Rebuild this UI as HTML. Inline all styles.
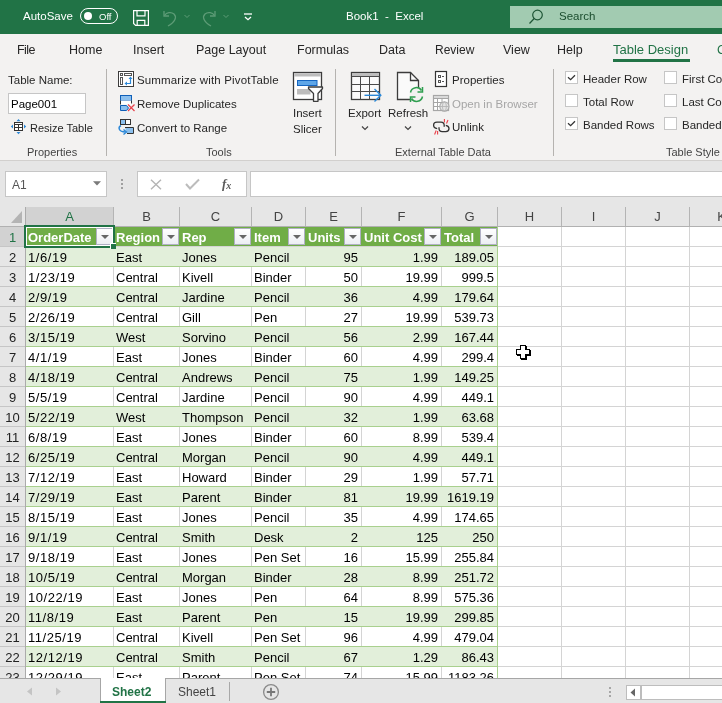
<!DOCTYPE html><html><head><meta charset="utf-8"><style>
*{margin:0;padding:0;box-sizing:border-box}
html,body{width:722px;height:703px;overflow:hidden;background:#e6e6e6;font-family:"Liberation Sans",sans-serif;position:relative}
.abs{position:absolute}
.t{position:absolute;white-space:nowrap;line-height:1;font-size:12px;color:#262626}
#title{position:absolute;left:0;top:0;width:722px;height:34px;background:#217346}
#ribbon{position:absolute;left:0;top:34px;width:722px;height:127px;background:#f3f2f1;border-bottom:1px solid #d2d0ce}
.colhdr{position:absolute;background:#e6e6e6}
.rowhdr{position:absolute;background:#e6e6e6}
.vl{position:absolute;width:1px}
.hl{position:absolute;height:1px}
.chl{position:absolute;top:207px;height:19px;line-height:19px;text-align:center;font-size:13px}
.th{position:absolute;height:19px;line-height:20px;padding-top:1px;padding-left:2px;font-size:13px;font-weight:bold;color:#fff;white-space:nowrap;overflow:hidden}
.td{position:absolute;height:19px;line-height:20px;padding-top:1px;padding-left:2px;font-size:13px;color:#000;white-space:nowrap}
.td.r{text-align:right;padding-left:0;padding-right:3px}
.rn{position:absolute;left:0;width:25px;height:19px;line-height:20px;padding-top:1px;text-align:center;font-size:13px}
.dd{position:absolute;width:17px;height:17px;border:1px solid #b0b0c4;background:linear-gradient(#fff,#eceef3)}
.dd i{position:absolute;left:3.5px;top:6px;width:0;height:0;border-left:4px solid transparent;border-right:4px solid transparent;border-top:4.5px solid #666}
.sep{position:absolute;width:1px;background:#b5b3b0}
.glabel{position:absolute;top:148px;font-size:11px;color:#444;white-space:nowrap;line-height:1}
.cb{position:absolute;width:13px;height:13px;border:1px solid #c6c6c6;background:#fff}
.cb svg{position:absolute;left:0;top:0}

.td.d{letter-spacing:0.55px}

#root{position:absolute;left:0;top:0;width:722px;height:703px;overflow:hidden;will-change:transform}

</style></head><body><div id="root">
<div id="title">
  <div class="t" style="left:23px;top:11px;color:#fff;font-size:11.5px">AutoSave</div>
  <div class="abs" style="left:80px;top:8px;width:38px;height:16px;border:1px solid #fff;border-radius:8px"></div>
  <div class="abs" style="left:84px;top:12px;width:8px;height:8px;background:#fff;border-radius:50%"></div>
  <div class="t" style="left:99px;top:12px;color:#fff;font-size:9.5px">Off</div>
  <svg class="abs" style="left:133px;top:10px" width="16" height="16" viewBox="0 0 16 16" fill="none" stroke="#fff" stroke-width="1.2">
    <path d="M0.6 0.6H15.4V15.4H2.6L0.6 13.4Z"/><path d="M4 0.6V5.8H12V0.6"/><path d="M4.2 15.4V10.4H11.8V15.4"/>
  </svg>
  <svg class="abs" style="left:160px;top:9px" width="32" height="18" viewBox="0 0 32 18" fill="none" stroke="#5e9c77" stroke-width="1.3">
    <path d="M4 2V7H9"/><path d="M4.5 6.5C6.5 3.5 11 2.5 14 5C17 8 15.5 12.5 8 17"/><path d="M24.5 6L27 8.5L29.5 6" stroke-width="1"/>
  </svg>
  <svg class="abs" style="left:200px;top:9px" width="32" height="18" viewBox="0 0 32 18" fill="none" stroke="#5e9c77" stroke-width="1.3">
    <path d="M15 2V7H10"/><path d="M14.5 6.5C12.5 3.5 8 2.5 5 5C2 8 3.5 12.5 11 17"/><path d="M23.5 6L26 8.5L28.5 6" stroke-width="1"/>
  </svg>
  <svg class="abs" style="left:243px;top:12px" width="10" height="10" viewBox="0 0 10 10" fill="none" stroke="#fff" stroke-width="1.3">
    <path d="M1 2H9"/><path d="M2 5L5 7.7L8 5"/>
  </svg>
  <div class="t" style="left:346px;top:11px;color:#fff;font-size:11.5px">Book1&nbsp; -&nbsp; Excel</div>
  <div class="abs" style="left:510px;top:6px;width:212px;height:22px;background:#a2cbb1"></div>
  <svg class="abs" style="left:528px;top:8px" width="16" height="18" viewBox="0 0 16 18" fill="none" stroke="#1e5535" stroke-width="1.2">
    <circle cx="9.5" cy="7" r="4.8"/><path d="M6.2 10.5L1.5 15.5"/>
  </svg>
  <div class="t" style="left:559px;top:11px;color:#1b4d2e;font-size:11.5px">Search</div>
</div>
<div id="ribbon"></div>
<div class="t" style="left:17px;top:44px;font-size:12.5px;letter-spacing:-0.6px">File</div>
<div class="t" style="left:69px;top:44px;font-size:12.5px">Home</div>
<div class="t" style="left:133px;top:44px;font-size:12.5px">Insert</div>
<div class="t" style="left:196px;top:44px;font-size:12.5px">Page Layout</div>
<div class="t" style="left:297px;top:44px;font-size:12.5px">Formulas</div>
<div class="t" style="left:379px;top:44px;font-size:12.5px">Data</div>
<div class="t" style="left:435px;top:44px;font-size:12px">Review</div>
<div class="t" style="left:503px;top:44px;font-size:12.5px">View</div>
<div class="t" style="left:557px;top:44px;font-size:12.5px">Help</div>
<div class="t" style="left:613px;top:43px;font-size:13px;color:#217346">Table Design</div>
<div class="abs" style="left:613px;top:59px;width:77px;height:3px;background:#217346"></div>
<div class="t" style="left:717px;top:44px;font-size:12.5px;color:#217346">G</div>

<!-- Properties group -->
<div class="t" style="left:8px;top:75px;font-size:11.5px">Table Name:</div>
<div class="abs" style="left:8px;top:93px;width:78px;height:21px;background:#fff;border:1px solid #c6c6c6"></div>
<div class="t" style="left:11px;top:99px;font-size:11.5px;color:#000">Page001</div>
<svg class="abs" style="left:10px;top:118px" width="18" height="18" viewBox="0 0 18 18">
  <rect x="4.5" y="4.5" width="8" height="8" fill="#fff" stroke="#333"/>
  <path d="M4.5 6.5H12.5M4.5 9.5H12.5M8.5 6.5V12.5" stroke="#333" fill="none"/>
  <path d="M6.5 3.2L8.5 1L10.5 3.2Z M6.5 14L8.5 16.2L10.5 14Z M3 6.5L0.8 8.5L3 10.5Z M14 6.5L16.2 8.5L14 10.5Z" fill="#2b88d8"/>
</svg>
<div class="t" style="left:30px;top:123px;font-size:11px">Resize Table</div>
<div class="glabel" style="left:27px;top:147px">Properties</div>
<div class="sep" style="left:106px;top:69px;height:87px"></div>

<!-- Tools group -->
<svg class="abs" style="left:118px;top:71px" width="16" height="16" viewBox="0 0 16 16">
  <rect x="0.5" y="0.5" width="15" height="15" fill="#fff" stroke="#3c3c3c"/>
  <rect x="2.5" y="2.5" width="2" height="2" fill="#fff" stroke="#555"/>
  <rect x="6.5" y="2.5" width="7" height="2" fill="#fff" stroke="#555"/>
  <rect x="2.5" y="6.5" width="2" height="7" fill="#fff" stroke="#555"/>
  <path d="M8 12.5H12.5V7" fill="none" stroke="#2b88d8" stroke-width="1.2"/>
  <path d="M10.5 8L12.5 5.5L14.5 8Z M9 10.5L6.5 12.5L9 14.5Z" fill="#2b88d8"/>
</svg>
<div class="t" style="left:137px;top:75px;font-size:11.5px;letter-spacing:0.15px">Summarize with PivotTable</div>
<svg class="abs" style="left:118px;top:94px" width="18" height="18" viewBox="0 0 18 18">
  <rect x="2.5" y="1.5" width="11" height="5" fill="#8cc0ee" stroke="#0f5fb8"/>
  <rect x="2.5" y="6.5" width="11" height="4" fill="#fff" stroke="none"/>
  <path d="M2.5 6.5V10.5M13.5 6.5V9.5" stroke="#333" fill="none"/>
  <path d="M2.5 11.5H8.5L10.5 14L8.5 16.5H2.5Z" fill="#8cc0ee" stroke="#0f5fb8"/>
  <path d="M10 10.5L16.5 17M16.5 10.5L10 17" stroke="#e8404a" stroke-width="1.2"/>
</svg>
<div class="t" style="left:137px;top:99px;font-size:11.5px">Remove Duplicates</div>
<svg class="abs" style="left:116px;top:117px" width="20" height="19" viewBox="0 0 20 19">
  <rect x="4.5" y="2.5" width="5" height="5" fill="#8cc0ee" stroke="#333"/>
  <rect x="9.5" y="2.5" width="5" height="5" fill="#fff" stroke="#333"/>
  <path d="M9 10.5H17.5V16.5H11" fill="#8cc0ee" stroke="#333"/>
  <path d="M5 8.5C2 10 2 15 9.5 15" fill="none" stroke="#2b88d8" stroke-width="1.4"/>
  <path d="M7.5 12.5L10.5 15L7.5 17.5" fill="none" stroke="#2b88d8" stroke-width="1.4"/>
</svg>
<div class="t" style="left:137px;top:123px;font-size:11.5px">Convert to Range</div>
<svg class="abs" style="left:292px;top:71px" width="32" height="32" viewBox="0 0 32 32">
  <rect x="1.5" y="1.5" width="28" height="27" fill="#fff" stroke="#3c3c3c" stroke-width="1.3"/>
  <rect x="2.2" y="2.2" width="26.6" height="3.3" fill="#bdbdbd"/>
  <rect x="5.5" y="9.5" width="19.5" height="5" fill="#5ea6e8" stroke="#1565c0"/>
  <rect x="5" y="18" width="13.5" height="5.5" fill="#bdbdbd"/>
  <path d="M16.5 16H30.5V17.5L26 22.5V30.3H21.5V22.5L16.5 17.5Z" fill="#fff" stroke="#3c3c3c" stroke-width="1.3" stroke-linejoin="round"/>
</svg>
<div class="t" style="left:293px;top:108px;font-size:11.5px">Insert</div>
<div class="t" style="left:293px;top:124px;font-size:11.5px">Slicer</div>
<div class="glabel" style="left:206px;top:147px">Tools</div>
<div class="sep" style="left:335px;top:69px;height:87px"></div>

<!-- External Table Data -->
<svg class="abs" style="left:350px;top:71px" width="34" height="32" viewBox="0 0 34 32">
  <rect x="1.5" y="1.5" width="28" height="27" fill="#fafafa" stroke="#3c3c3c" stroke-width="1.3"/>
  <rect x="2" y="2" width="27" height="3.5" fill="#bdbdbd"/>
  <path d="M1.5 5.5H29.5M1.5 13.5H29.5M1.5 20.5H29.5M10.5 5.5V28.5M19.5 5.5V28.5" stroke="#4a4a4a" fill="none"/>
  <path d="M14.5 24.3H31" stroke="#2b88d8" stroke-width="1.4"/>
  <path d="M24.5 18L30.8 24.3L24.5 30.6" fill="none" stroke="#2b88d8" stroke-width="1.4"/>
</svg>
<div class="t" style="left:348px;top:108px;font-size:11.5px">Export</div>
<svg class="abs" style="left:361px;top:125px" width="8" height="6" viewBox="0 0 8 6"><path d="M1 1.5L4 4.5L7 1.5" fill="none" stroke="#444" stroke-width="1.2"/></svg>
<svg class="abs" style="left:396px;top:71px" width="32" height="32" viewBox="0 0 32 32">
  <path d="M1.5 1.5H14.5L22.5 9.5V28.5H1.5Z" fill="#fafafa" stroke="#3c3c3c" stroke-width="1.3"/>
  <path d="M14.5 1.5V9.5H22.5" fill="none" stroke="#3c3c3c" stroke-width="1.3"/>
  <circle cx="20.5" cy="23.5" r="7" fill="#f3f2f1"/>
  <path d="M14.5 21.5A6 6 0 0 1 25.5 19.5M26.5 25.5A6 6 0 0 1 15.5 27.5" fill="none" stroke="#2e9e4f" stroke-width="1.5"/>
  <path d="M26.5 16V21H21.5M14.5 31V26H19.5" fill="none" stroke="#2e9e4f" stroke-width="1.5"/>
</svg>
<div class="t" style="left:388px;top:108px;font-size:11.5px">Refresh</div>
<svg class="abs" style="left:404px;top:125px" width="8" height="6" viewBox="0 0 8 6"><path d="M1 1.5L4 4.5L7 1.5" fill="none" stroke="#444" stroke-width="1.2"/></svg>
<svg class="abs" style="left:434px;top:70px" width="14" height="18" viewBox="0 0 14 18">
  <rect x="1.5" y="1.5" width="11" height="15" fill="#fff" stroke="#333" stroke-width="1.2"/>
  <rect x="4.5" y="5.5" width="2" height="2" fill="#fff" stroke="#555"/>
  <rect x="4.5" y="10.5" width="2" height="2" fill="#fff" stroke="#555"/>
  <path d="M8 6.5H10M8 11.5H10" stroke="#555"/>
</svg>
<div class="t" style="left:452px;top:75px;font-size:11.5px">Properties</div>
<svg class="abs" style="left:432px;top:94px" width="18" height="18" viewBox="0 0 18 18">
  <rect x="1.5" y="1.5" width="15" height="15" fill="#fff" stroke="#a6a6a6" stroke-width="1.2"/>
  <rect x="2" y="2" width="14" height="2.5" fill="#d9d9d9"/>
  <path d="M1.5 4.5H16.5M1.5 8.5H10M1.5 12.5H9M5.5 4.5V16.5M10 4.5V8.5" stroke="#a6a6a6" fill="none"/>
  <circle cx="12.4" cy="12.5" r="4.6" fill="#e4e4e4" stroke="#a6a6a6" stroke-width="1.1"/>
  <ellipse cx="12.4" cy="12.5" rx="2" ry="4.4" fill="none" stroke="#b4b4b4" stroke-width="0.8"/>
  <path d="M8 12.5H16.8" stroke="#b4b4b4" stroke-width="0.9"/>
</svg>
<div class="t" style="left:452px;top:99px;font-size:11.5px;color:#a6a6a6">Open in Browser</div>
<svg class="abs" style="left:432px;top:118px" width="18" height="18" viewBox="0 0 18 18">
  <path d="M5.2 10.6C3 10.3 1.6 9 1.6 7.3C1.6 5.4 3.1 4.2 5 4.2H9C11 4.2 12.2 5.6 12.2 7.6V8.8" fill="none" stroke="#333" stroke-width="1.3"/>
  <path d="M7 9.2V10.2C7 12.2 8.2 13.6 10.2 13.6H13.8C15.7 13.6 17 12.4 17 10.6C17 9 15.8 7.8 13.8 7.4" fill="none" stroke="#333" stroke-width="1.3"/>
  <path d="M12.4 1V4.5M16 2L14.5 5.5M4.2 12.5L2.6 16.5M5.6 13V16.6" stroke="#e8404a" stroke-width="1.1" fill="none"/>
</svg>
<div class="t" style="left:452px;top:122px;font-size:11.5px">Unlink</div>
<div class="glabel" style="left:395px;top:147px;font-size:11px">External Table Data</div>
<div class="sep" style="left:553px;top:69px;height:87px"></div>

<!-- Table Style Options -->
<div class="cb" style="left:565px;top:71px"><svg width="11" height="11" viewBox="0 0 11 11"><path d="M2 5.3L4.6 7.7L9 3.2" fill="none" stroke="#333" stroke-width="1.3"/></svg></div>
<div class="t" style="left:583px;top:74px;font-size:11.5px">Header Row</div>
<div class="cb" style="left:565px;top:94px"></div>
<div class="t" style="left:583px;top:97px;font-size:11.5px">Total Row</div>
<div class="cb" style="left:565px;top:117px"><svg width="11" height="11" viewBox="0 0 11 11"><path d="M2 5.3L4.6 7.7L9 3.2" fill="none" stroke="#333" stroke-width="1.3"/></svg></div>
<div class="t" style="left:583px;top:120px;font-size:11.5px">Banded Rows</div>
<div class="cb" style="left:664px;top:71px"></div>
<div class="t" style="left:682px;top:74px;font-size:11.5px">First Column</div>
<div class="cb" style="left:664px;top:94px"></div>
<div class="t" style="left:682px;top:97px;font-size:11.5px">Last Column</div>
<div class="cb" style="left:664px;top:117px"></div>
<div class="t" style="left:682px;top:120px;font-size:11.5px">Banded Columns</div>
<div class="glabel" style="left:666px;top:147px">Table Style Options</div>

<!-- Formula bar -->
<div class="abs" style="left:5px;top:171px;width:102px;height:26px;background:#fff;border:1px solid #c6c6c6"></div>
<div class="t" style="left:12px;top:179px;font-size:12px;color:#555">A1</div>
<svg class="abs" style="left:93px;top:181px" width="8" height="5" viewBox="0 0 8 5"><path d="M0 0.2H8L4 4.5Z" fill="#7a7a7a"/></svg>
<div class="abs" style="left:121px;top:179px;width:2px;height:2px;background:#a0a0a0"></div>
<div class="abs" style="left:121px;top:183px;width:2px;height:2px;background:#a0a0a0"></div>
<div class="abs" style="left:121px;top:187px;width:2px;height:2px;background:#a0a0a0"></div>
<div class="abs" style="left:137px;top:171px;width:110px;height:26px;background:#fff;border:1px solid #c6c6c6"></div>
<svg class="abs" style="left:150px;top:179px" width="12" height="11" viewBox="0 0 12 11"><path d="M1 0.8L11 10.2M11 0.8L1 10.2" stroke="#b4b4b4" stroke-width="1.4"/></svg>
<svg class="abs" style="left:185px;top:178px" width="15" height="12" viewBox="0 0 15 12"><path d="M1 6L5 10.5L14 1.5" fill="none" stroke="#bcbcbc" stroke-width="2"/></svg>
<div class="t" style="left:222px;top:177px;font-size:13px;color:#5a5a5a;font-family:'Liberation Serif',serif;font-style:italic;font-weight:bold">f<span style="font-size:10px;position:relative;top:1px">x</span></div>
<div class="abs" style="left:250px;top:171px;width:480px;height:26px;background:#fff;border:1px solid #c6c6c6"></div>

<div id="grid">
<div class="colhdr" style="left:0;top:207px;width:722px;height:19px"></div>
<svg style="position:absolute;left:0;top:207px" width="25" height="19"><polygon points="11,16 22,16 22,4" fill="#b4b4b4"/></svg>
<div style="position:absolute;left:26px;top:207px;width:87px;height:19px;background:#d2d2d2"></div>
<div class="vl" style="left:25px;top:207px;height:19px;background:#b4b4b4"></div>
<div class="chl" style="left:26px;width:87px;color:#217346">A</div>
<div class="vl" style="left:113px;top:207px;height:19px;background:#b4b4b4"></div>
<div class="chl" style="left:114px;width:65px;color:#444">B</div>
<div class="vl" style="left:179px;top:207px;height:19px;background:#b4b4b4"></div>
<div class="chl" style="left:180px;width:71px;color:#444">C</div>
<div class="vl" style="left:251px;top:207px;height:19px;background:#b4b4b4"></div>
<div class="chl" style="left:252px;width:53px;color:#444">D</div>
<div class="vl" style="left:305px;top:207px;height:19px;background:#b4b4b4"></div>
<div class="chl" style="left:306px;width:55px;color:#444">E</div>
<div class="vl" style="left:361px;top:207px;height:19px;background:#b4b4b4"></div>
<div class="chl" style="left:362px;width:79px;color:#444">F</div>
<div class="vl" style="left:441px;top:207px;height:19px;background:#b4b4b4"></div>
<div class="chl" style="left:442px;width:55px;color:#444">G</div>
<div class="vl" style="left:497px;top:207px;height:19px;background:#b4b4b4"></div>
<div class="chl" style="left:498px;width:63px;color:#444">H</div>
<div class="vl" style="left:561px;top:207px;height:19px;background:#b4b4b4"></div>
<div class="chl" style="left:562px;width:63px;color:#444">I</div>
<div class="vl" style="left:625px;top:207px;height:19px;background:#b4b4b4"></div>
<div class="chl" style="left:626px;width:63px;color:#444">J</div>
<div class="vl" style="left:689px;top:207px;height:19px;background:#b4b4b4"></div>
<div class="chl" style="left:690px;width:63px;color:#444">K</div>
<div class="hl" style="left:0;top:226px;width:722px;background:#b1b1b1"></div>
<div class="rowhdr" style="left:0;top:227px;width:25px;height:451px"></div>
<div style="position:absolute;left:0;top:227px;width:25px;height:19px;background:#d2d2d2"></div>
<div class="vl" style="left:25px;top:207px;height:471px;background:#ababab"></div>
<div style="position:absolute;left:26px;top:227px;width:696px;height:451px;background:#fff"></div>
<div class="hl" style="left:26px;top:246px;width:696px;background:#d4d4d4"></div>
<div class="hl" style="left:0;top:246px;width:25px;background:#c6c6c6"></div>
<div class="hl" style="left:26px;top:266px;width:696px;background:#d4d4d4"></div>
<div class="hl" style="left:0;top:266px;width:25px;background:#c6c6c6"></div>
<div class="hl" style="left:26px;top:286px;width:696px;background:#d4d4d4"></div>
<div class="hl" style="left:0;top:286px;width:25px;background:#c6c6c6"></div>
<div class="hl" style="left:26px;top:306px;width:696px;background:#d4d4d4"></div>
<div class="hl" style="left:0;top:306px;width:25px;background:#c6c6c6"></div>
<div class="hl" style="left:26px;top:326px;width:696px;background:#d4d4d4"></div>
<div class="hl" style="left:0;top:326px;width:25px;background:#c6c6c6"></div>
<div class="hl" style="left:26px;top:346px;width:696px;background:#d4d4d4"></div>
<div class="hl" style="left:0;top:346px;width:25px;background:#c6c6c6"></div>
<div class="hl" style="left:26px;top:366px;width:696px;background:#d4d4d4"></div>
<div class="hl" style="left:0;top:366px;width:25px;background:#c6c6c6"></div>
<div class="hl" style="left:26px;top:386px;width:696px;background:#d4d4d4"></div>
<div class="hl" style="left:0;top:386px;width:25px;background:#c6c6c6"></div>
<div class="hl" style="left:26px;top:406px;width:696px;background:#d4d4d4"></div>
<div class="hl" style="left:0;top:406px;width:25px;background:#c6c6c6"></div>
<div class="hl" style="left:26px;top:426px;width:696px;background:#d4d4d4"></div>
<div class="hl" style="left:0;top:426px;width:25px;background:#c6c6c6"></div>
<div class="hl" style="left:26px;top:446px;width:696px;background:#d4d4d4"></div>
<div class="hl" style="left:0;top:446px;width:25px;background:#c6c6c6"></div>
<div class="hl" style="left:26px;top:466px;width:696px;background:#d4d4d4"></div>
<div class="hl" style="left:0;top:466px;width:25px;background:#c6c6c6"></div>
<div class="hl" style="left:26px;top:486px;width:696px;background:#d4d4d4"></div>
<div class="hl" style="left:0;top:486px;width:25px;background:#c6c6c6"></div>
<div class="hl" style="left:26px;top:506px;width:696px;background:#d4d4d4"></div>
<div class="hl" style="left:0;top:506px;width:25px;background:#c6c6c6"></div>
<div class="hl" style="left:26px;top:526px;width:696px;background:#d4d4d4"></div>
<div class="hl" style="left:0;top:526px;width:25px;background:#c6c6c6"></div>
<div class="hl" style="left:26px;top:546px;width:696px;background:#d4d4d4"></div>
<div class="hl" style="left:0;top:546px;width:25px;background:#c6c6c6"></div>
<div class="hl" style="left:26px;top:566px;width:696px;background:#d4d4d4"></div>
<div class="hl" style="left:0;top:566px;width:25px;background:#c6c6c6"></div>
<div class="hl" style="left:26px;top:586px;width:696px;background:#d4d4d4"></div>
<div class="hl" style="left:0;top:586px;width:25px;background:#c6c6c6"></div>
<div class="hl" style="left:26px;top:606px;width:696px;background:#d4d4d4"></div>
<div class="hl" style="left:0;top:606px;width:25px;background:#c6c6c6"></div>
<div class="hl" style="left:26px;top:626px;width:696px;background:#d4d4d4"></div>
<div class="hl" style="left:0;top:626px;width:25px;background:#c6c6c6"></div>
<div class="hl" style="left:26px;top:646px;width:696px;background:#d4d4d4"></div>
<div class="hl" style="left:0;top:646px;width:25px;background:#c6c6c6"></div>
<div class="hl" style="left:26px;top:666px;width:696px;background:#d4d4d4"></div>
<div class="hl" style="left:0;top:666px;width:25px;background:#c6c6c6"></div>
<div class="vl" style="left:113px;top:227px;height:451px;background:#d4d4d4"></div>
<div class="vl" style="left:179px;top:227px;height:451px;background:#d4d4d4"></div>
<div class="vl" style="left:251px;top:227px;height:451px;background:#d4d4d4"></div>
<div class="vl" style="left:305px;top:227px;height:451px;background:#d4d4d4"></div>
<div class="vl" style="left:361px;top:227px;height:451px;background:#d4d4d4"></div>
<div class="vl" style="left:441px;top:227px;height:451px;background:#d4d4d4"></div>
<div class="vl" style="left:497px;top:227px;height:451px;background:#d4d4d4"></div>
<div class="vl" style="left:561px;top:227px;height:451px;background:#d4d4d4"></div>
<div class="vl" style="left:625px;top:227px;height:451px;background:#d4d4d4"></div>
<div class="vl" style="left:689px;top:227px;height:451px;background:#d4d4d4"></div>
<div style="position:absolute;left:26px;top:227px;width:471px;height:19px;background:#70ad47"></div>
<div class="th" style="left:26px;top:227px;width:87px">OrderDate</div>
<div class="dd" style="left:96px;top:228px"><i></i></div>
<div class="th" style="left:114px;top:227px;width:65px">Region</div>
<div class="dd" style="left:162px;top:228px"><i></i></div>
<div class="th" style="left:180px;top:227px;width:71px">Rep</div>
<div class="dd" style="left:234px;top:228px"><i></i></div>
<div class="th" style="left:252px;top:227px;width:53px">Item</div>
<div class="dd" style="left:288px;top:228px"><i></i></div>
<div class="th" style="left:306px;top:227px;width:55px">Units</div>
<div class="dd" style="left:344px;top:228px"><i></i></div>
<div class="th" style="left:362px;top:227px;width:79px">Unit Cost</div>
<div class="dd" style="left:424px;top:228px"><i></i></div>
<div class="th" style="left:442px;top:227px;width:55px">Total</div>
<div class="dd" style="left:480px;top:228px"><i></i></div>
<div class="rn" style="top:227px;color:#217346">1</div>
<div style="position:absolute;left:26px;top:247px;width:471px;height:19px;background:#e2efda"></div>
<div class="hl" style="left:26px;top:266px;width:471px;background:#a9d08e"></div>
<div class="td d" style="left:26px;top:247px;width:87px">1/6/19</div>
<div class="td" style="left:114px;top:247px;width:65px">East</div>
<div class="td" style="left:180px;top:247px;width:71px">Jones</div>
<div class="td" style="left:252px;top:247px;width:53px">Pencil</div>
<div class="td r" style="left:306px;top:247px;width:55px">95</div>
<div class="td r" style="left:362px;top:247px;width:79px">1.99</div>
<div class="td r" style="left:442px;top:247px;width:55px">189.05</div>
<div class="rn" style="top:247px;color:#222">2</div>
<div class="hl" style="left:26px;top:286px;width:471px;background:#a9d08e"></div>
<div class="td d" style="left:26px;top:267px;width:87px">1/23/19</div>
<div class="td" style="left:114px;top:267px;width:65px">Central</div>
<div class="td" style="left:180px;top:267px;width:71px">Kivell</div>
<div class="td" style="left:252px;top:267px;width:53px">Binder</div>
<div class="td r" style="left:306px;top:267px;width:55px">50</div>
<div class="td r" style="left:362px;top:267px;width:79px">19.99</div>
<div class="td r" style="left:442px;top:267px;width:55px">999.5</div>
<div class="rn" style="top:267px;color:#222">3</div>
<div style="position:absolute;left:26px;top:287px;width:471px;height:19px;background:#e2efda"></div>
<div class="hl" style="left:26px;top:306px;width:471px;background:#a9d08e"></div>
<div class="td d" style="left:26px;top:287px;width:87px">2/9/19</div>
<div class="td" style="left:114px;top:287px;width:65px">Central</div>
<div class="td" style="left:180px;top:287px;width:71px">Jardine</div>
<div class="td" style="left:252px;top:287px;width:53px">Pencil</div>
<div class="td r" style="left:306px;top:287px;width:55px">36</div>
<div class="td r" style="left:362px;top:287px;width:79px">4.99</div>
<div class="td r" style="left:442px;top:287px;width:55px">179.64</div>
<div class="rn" style="top:287px;color:#222">4</div>
<div class="hl" style="left:26px;top:326px;width:471px;background:#a9d08e"></div>
<div class="td d" style="left:26px;top:307px;width:87px">2/26/19</div>
<div class="td" style="left:114px;top:307px;width:65px">Central</div>
<div class="td" style="left:180px;top:307px;width:71px">Gill</div>
<div class="td" style="left:252px;top:307px;width:53px">Pen</div>
<div class="td r" style="left:306px;top:307px;width:55px">27</div>
<div class="td r" style="left:362px;top:307px;width:79px">19.99</div>
<div class="td r" style="left:442px;top:307px;width:55px">539.73</div>
<div class="rn" style="top:307px;color:#222">5</div>
<div style="position:absolute;left:26px;top:327px;width:471px;height:19px;background:#e2efda"></div>
<div class="hl" style="left:26px;top:346px;width:471px;background:#a9d08e"></div>
<div class="td d" style="left:26px;top:327px;width:87px">3/15/19</div>
<div class="td" style="left:114px;top:327px;width:65px">West</div>
<div class="td" style="left:180px;top:327px;width:71px">Sorvino</div>
<div class="td" style="left:252px;top:327px;width:53px">Pencil</div>
<div class="td r" style="left:306px;top:327px;width:55px">56</div>
<div class="td r" style="left:362px;top:327px;width:79px">2.99</div>
<div class="td r" style="left:442px;top:327px;width:55px">167.44</div>
<div class="rn" style="top:327px;color:#222">6</div>
<div class="hl" style="left:26px;top:366px;width:471px;background:#a9d08e"></div>
<div class="td d" style="left:26px;top:347px;width:87px">4/1/19</div>
<div class="td" style="left:114px;top:347px;width:65px">East</div>
<div class="td" style="left:180px;top:347px;width:71px">Jones</div>
<div class="td" style="left:252px;top:347px;width:53px">Binder</div>
<div class="td r" style="left:306px;top:347px;width:55px">60</div>
<div class="td r" style="left:362px;top:347px;width:79px">4.99</div>
<div class="td r" style="left:442px;top:347px;width:55px">299.4</div>
<div class="rn" style="top:347px;color:#222">7</div>
<div style="position:absolute;left:26px;top:367px;width:471px;height:19px;background:#e2efda"></div>
<div class="hl" style="left:26px;top:386px;width:471px;background:#a9d08e"></div>
<div class="td d" style="left:26px;top:367px;width:87px">4/18/19</div>
<div class="td" style="left:114px;top:367px;width:65px">Central</div>
<div class="td" style="left:180px;top:367px;width:71px">Andrews</div>
<div class="td" style="left:252px;top:367px;width:53px">Pencil</div>
<div class="td r" style="left:306px;top:367px;width:55px">75</div>
<div class="td r" style="left:362px;top:367px;width:79px">1.99</div>
<div class="td r" style="left:442px;top:367px;width:55px">149.25</div>
<div class="rn" style="top:367px;color:#222">8</div>
<div class="hl" style="left:26px;top:406px;width:471px;background:#a9d08e"></div>
<div class="td d" style="left:26px;top:387px;width:87px">5/5/19</div>
<div class="td" style="left:114px;top:387px;width:65px">Central</div>
<div class="td" style="left:180px;top:387px;width:71px">Jardine</div>
<div class="td" style="left:252px;top:387px;width:53px">Pencil</div>
<div class="td r" style="left:306px;top:387px;width:55px">90</div>
<div class="td r" style="left:362px;top:387px;width:79px">4.99</div>
<div class="td r" style="left:442px;top:387px;width:55px">449.1</div>
<div class="rn" style="top:387px;color:#222">9</div>
<div style="position:absolute;left:26px;top:407px;width:471px;height:19px;background:#e2efda"></div>
<div class="hl" style="left:26px;top:426px;width:471px;background:#a9d08e"></div>
<div class="td d" style="left:26px;top:407px;width:87px">5/22/19</div>
<div class="td" style="left:114px;top:407px;width:65px">West</div>
<div class="td" style="left:180px;top:407px;width:71px">Thompson</div>
<div class="td" style="left:252px;top:407px;width:53px">Pencil</div>
<div class="td r" style="left:306px;top:407px;width:55px">32</div>
<div class="td r" style="left:362px;top:407px;width:79px">1.99</div>
<div class="td r" style="left:442px;top:407px;width:55px">63.68</div>
<div class="rn" style="top:407px;color:#222">10</div>
<div class="hl" style="left:26px;top:446px;width:471px;background:#a9d08e"></div>
<div class="td d" style="left:26px;top:427px;width:87px">6/8/19</div>
<div class="td" style="left:114px;top:427px;width:65px">East</div>
<div class="td" style="left:180px;top:427px;width:71px">Jones</div>
<div class="td" style="left:252px;top:427px;width:53px">Binder</div>
<div class="td r" style="left:306px;top:427px;width:55px">60</div>
<div class="td r" style="left:362px;top:427px;width:79px">8.99</div>
<div class="td r" style="left:442px;top:427px;width:55px">539.4</div>
<div class="rn" style="top:427px;color:#222">11</div>
<div style="position:absolute;left:26px;top:447px;width:471px;height:19px;background:#e2efda"></div>
<div class="hl" style="left:26px;top:466px;width:471px;background:#a9d08e"></div>
<div class="td d" style="left:26px;top:447px;width:87px">6/25/19</div>
<div class="td" style="left:114px;top:447px;width:65px">Central</div>
<div class="td" style="left:180px;top:447px;width:71px">Morgan</div>
<div class="td" style="left:252px;top:447px;width:53px">Pencil</div>
<div class="td r" style="left:306px;top:447px;width:55px">90</div>
<div class="td r" style="left:362px;top:447px;width:79px">4.99</div>
<div class="td r" style="left:442px;top:447px;width:55px">449.1</div>
<div class="rn" style="top:447px;color:#222">12</div>
<div class="hl" style="left:26px;top:486px;width:471px;background:#a9d08e"></div>
<div class="td d" style="left:26px;top:467px;width:87px">7/12/19</div>
<div class="td" style="left:114px;top:467px;width:65px">East</div>
<div class="td" style="left:180px;top:467px;width:71px">Howard</div>
<div class="td" style="left:252px;top:467px;width:53px">Binder</div>
<div class="td r" style="left:306px;top:467px;width:55px">29</div>
<div class="td r" style="left:362px;top:467px;width:79px">1.99</div>
<div class="td r" style="left:442px;top:467px;width:55px">57.71</div>
<div class="rn" style="top:467px;color:#222">13</div>
<div style="position:absolute;left:26px;top:487px;width:471px;height:19px;background:#e2efda"></div>
<div class="hl" style="left:26px;top:506px;width:471px;background:#a9d08e"></div>
<div class="td d" style="left:26px;top:487px;width:87px">7/29/19</div>
<div class="td" style="left:114px;top:487px;width:65px">East</div>
<div class="td" style="left:180px;top:487px;width:71px">Parent</div>
<div class="td" style="left:252px;top:487px;width:53px">Binder</div>
<div class="td r" style="left:306px;top:487px;width:55px">81</div>
<div class="td r" style="left:362px;top:487px;width:79px">19.99</div>
<div class="td r" style="left:442px;top:487px;width:55px">1619.19</div>
<div class="rn" style="top:487px;color:#222">14</div>
<div class="hl" style="left:26px;top:526px;width:471px;background:#a9d08e"></div>
<div class="td d" style="left:26px;top:507px;width:87px">8/15/19</div>
<div class="td" style="left:114px;top:507px;width:65px">East</div>
<div class="td" style="left:180px;top:507px;width:71px">Jones</div>
<div class="td" style="left:252px;top:507px;width:53px">Pencil</div>
<div class="td r" style="left:306px;top:507px;width:55px">35</div>
<div class="td r" style="left:362px;top:507px;width:79px">4.99</div>
<div class="td r" style="left:442px;top:507px;width:55px">174.65</div>
<div class="rn" style="top:507px;color:#222">15</div>
<div style="position:absolute;left:26px;top:527px;width:471px;height:19px;background:#e2efda"></div>
<div class="hl" style="left:26px;top:546px;width:471px;background:#a9d08e"></div>
<div class="td d" style="left:26px;top:527px;width:87px">9/1/19</div>
<div class="td" style="left:114px;top:527px;width:65px">Central</div>
<div class="td" style="left:180px;top:527px;width:71px">Smith</div>
<div class="td" style="left:252px;top:527px;width:53px">Desk</div>
<div class="td r" style="left:306px;top:527px;width:55px">2</div>
<div class="td r" style="left:362px;top:527px;width:79px">125</div>
<div class="td r" style="left:442px;top:527px;width:55px">250</div>
<div class="rn" style="top:527px;color:#222">16</div>
<div class="hl" style="left:26px;top:566px;width:471px;background:#a9d08e"></div>
<div class="td d" style="left:26px;top:547px;width:87px">9/18/19</div>
<div class="td" style="left:114px;top:547px;width:65px">East</div>
<div class="td" style="left:180px;top:547px;width:71px">Jones</div>
<div class="td" style="left:252px;top:547px;width:53px">Pen Set</div>
<div class="td r" style="left:306px;top:547px;width:55px">16</div>
<div class="td r" style="left:362px;top:547px;width:79px">15.99</div>
<div class="td r" style="left:442px;top:547px;width:55px">255.84</div>
<div class="rn" style="top:547px;color:#222">17</div>
<div style="position:absolute;left:26px;top:567px;width:471px;height:19px;background:#e2efda"></div>
<div class="hl" style="left:26px;top:586px;width:471px;background:#a9d08e"></div>
<div class="td d" style="left:26px;top:567px;width:87px">10/5/19</div>
<div class="td" style="left:114px;top:567px;width:65px">Central</div>
<div class="td" style="left:180px;top:567px;width:71px">Morgan</div>
<div class="td" style="left:252px;top:567px;width:53px">Binder</div>
<div class="td r" style="left:306px;top:567px;width:55px">28</div>
<div class="td r" style="left:362px;top:567px;width:79px">8.99</div>
<div class="td r" style="left:442px;top:567px;width:55px">251.72</div>
<div class="rn" style="top:567px;color:#222">18</div>
<div class="hl" style="left:26px;top:606px;width:471px;background:#a9d08e"></div>
<div class="td d" style="left:26px;top:587px;width:87px">10/22/19</div>
<div class="td" style="left:114px;top:587px;width:65px">East</div>
<div class="td" style="left:180px;top:587px;width:71px">Jones</div>
<div class="td" style="left:252px;top:587px;width:53px">Pen</div>
<div class="td r" style="left:306px;top:587px;width:55px">64</div>
<div class="td r" style="left:362px;top:587px;width:79px">8.99</div>
<div class="td r" style="left:442px;top:587px;width:55px">575.36</div>
<div class="rn" style="top:587px;color:#222">19</div>
<div style="position:absolute;left:26px;top:607px;width:471px;height:19px;background:#e2efda"></div>
<div class="hl" style="left:26px;top:626px;width:471px;background:#a9d08e"></div>
<div class="td d" style="left:26px;top:607px;width:87px">11/8/19</div>
<div class="td" style="left:114px;top:607px;width:65px">East</div>
<div class="td" style="left:180px;top:607px;width:71px">Parent</div>
<div class="td" style="left:252px;top:607px;width:53px">Pen</div>
<div class="td r" style="left:306px;top:607px;width:55px">15</div>
<div class="td r" style="left:362px;top:607px;width:79px">19.99</div>
<div class="td r" style="left:442px;top:607px;width:55px">299.85</div>
<div class="rn" style="top:607px;color:#222">20</div>
<div class="hl" style="left:26px;top:646px;width:471px;background:#a9d08e"></div>
<div class="td d" style="left:26px;top:627px;width:87px">11/25/19</div>
<div class="td" style="left:114px;top:627px;width:65px">Central</div>
<div class="td" style="left:180px;top:627px;width:71px">Kivell</div>
<div class="td" style="left:252px;top:627px;width:53px">Pen Set</div>
<div class="td r" style="left:306px;top:627px;width:55px">96</div>
<div class="td r" style="left:362px;top:627px;width:79px">4.99</div>
<div class="td r" style="left:442px;top:627px;width:55px">479.04</div>
<div class="rn" style="top:627px;color:#222">21</div>
<div style="position:absolute;left:26px;top:647px;width:471px;height:19px;background:#e2efda"></div>
<div class="hl" style="left:26px;top:666px;width:471px;background:#a9d08e"></div>
<div class="td d" style="left:26px;top:647px;width:87px">12/12/19</div>
<div class="td" style="left:114px;top:647px;width:65px">Central</div>
<div class="td" style="left:180px;top:647px;width:71px">Smith</div>
<div class="td" style="left:252px;top:647px;width:53px">Pencil</div>
<div class="td r" style="left:306px;top:647px;width:55px">67</div>
<div class="td r" style="left:362px;top:647px;width:79px">1.29</div>
<div class="td r" style="left:442px;top:647px;width:55px">86.43</div>
<div class="rn" style="top:647px;color:#222">22</div>
<div class="td d" style="left:26px;top:667px;width:87px">12/29/19</div>
<div class="td" style="left:114px;top:667px;width:65px">East</div>
<div class="td" style="left:180px;top:667px;width:71px">Parent</div>
<div class="td" style="left:252px;top:667px;width:53px">Pen Set</div>
<div class="td r" style="left:306px;top:667px;width:55px">74</div>
<div class="td r" style="left:362px;top:667px;width:79px">15.99</div>
<div class="td r" style="left:442px;top:667px;width:55px">1183.26</div>
<div class="rn" style="top:667px;color:#222">23</div>
<div class="vl" style="left:497px;top:227px;height:451px;background:#a9d08e"></div>
<div style="position:absolute;left:24px;top:225px;width:91px;height:23px;border:2px solid #217346;box-shadow:inset 0 0 0 1px #fff"></div>
<div style="position:absolute;left:110px;top:243px;width:6px;height:6px;background:#fff"></div><div style="position:absolute;left:111px;top:244px;width:5px;height:5px;background:#217346"></div>
<svg style="position:absolute;left:510px;top:340px" width="26" height="26" viewBox="510 340 26 26" shape-rendering="crispEdges"><rect x="520" y="345" width="6" height="14"/><rect x="516" y="349" width="14" height="6"/><rect x="521" y="346" width="6" height="14"/><rect x="517" y="350" width="14" height="6"/><rect x="521" y="346" width="4" height="12" fill="#fff"/><rect x="517" y="350" width="12" height="4" fill="#fff"/></svg>
</div>
<div class="abs" style="left:0;top:678px;width:722px;height:25px;background:#e6e6e6;border-top:1px solid #a6a6a6"></div>
<svg class="abs" style="left:26px;top:687px" width="36" height="9" viewBox="0 0 36 9"><path d="M6 0.5V8.5L1 4.5Z M30 0.5V8.5L35 4.5Z" fill="#c4c4c4"/></svg>
<div class="abs" style="left:100px;top:678px;width:66px;height:25px;background:#fff;border-left:1px solid #a6a6a6;border-right:1px solid #a6a6a6"></div>
<div class="abs" style="left:100px;top:701px;width:66px;height:2px;background:#217346"></div>
<div class="t" style="left:112px;top:686px;font-size:12px;font-weight:bold;color:#217346">Sheet2</div>
<div class="t" style="left:178px;top:686px;font-size:12px;color:#444">Sheet1</div>
<div class="abs" style="left:229px;top:682px;width:1px;height:19px;background:#a8a8a8"></div>
<svg class="abs" style="left:262px;top:683px" width="18" height="18" viewBox="0 0 18 18"><circle cx="9" cy="9" r="7.4" fill="none" stroke="#8a8a8a" stroke-width="1.3"/><path d="M9 4.8V13.2M4.8 9H13.2" stroke="#777" stroke-width="1.8"/></svg>
<div class="abs" style="left:609px;top:687px;width:2px;height:2px;background:#a6a6a6"></div>
<div class="abs" style="left:609px;top:691px;width:2px;height:2px;background:#a6a6a6"></div>
<div class="abs" style="left:609px;top:695px;width:2px;height:2px;background:#a6a6a6"></div>
<div class="abs" style="left:626px;top:685px;width:100px;height:15px;background:#fff;border:1px solid #bdbdbd"></div>
<div class="abs" style="left:640px;top:686px;width:2px;height:13px;background:#bdbdbd"></div>
<svg class="abs" style="left:630px;top:688px" width="6" height="9" viewBox="0 0 6 9"><path d="M5 0.5V8.5L0.5 4.5Z" fill="#666"/></svg>

</div></body></html>
